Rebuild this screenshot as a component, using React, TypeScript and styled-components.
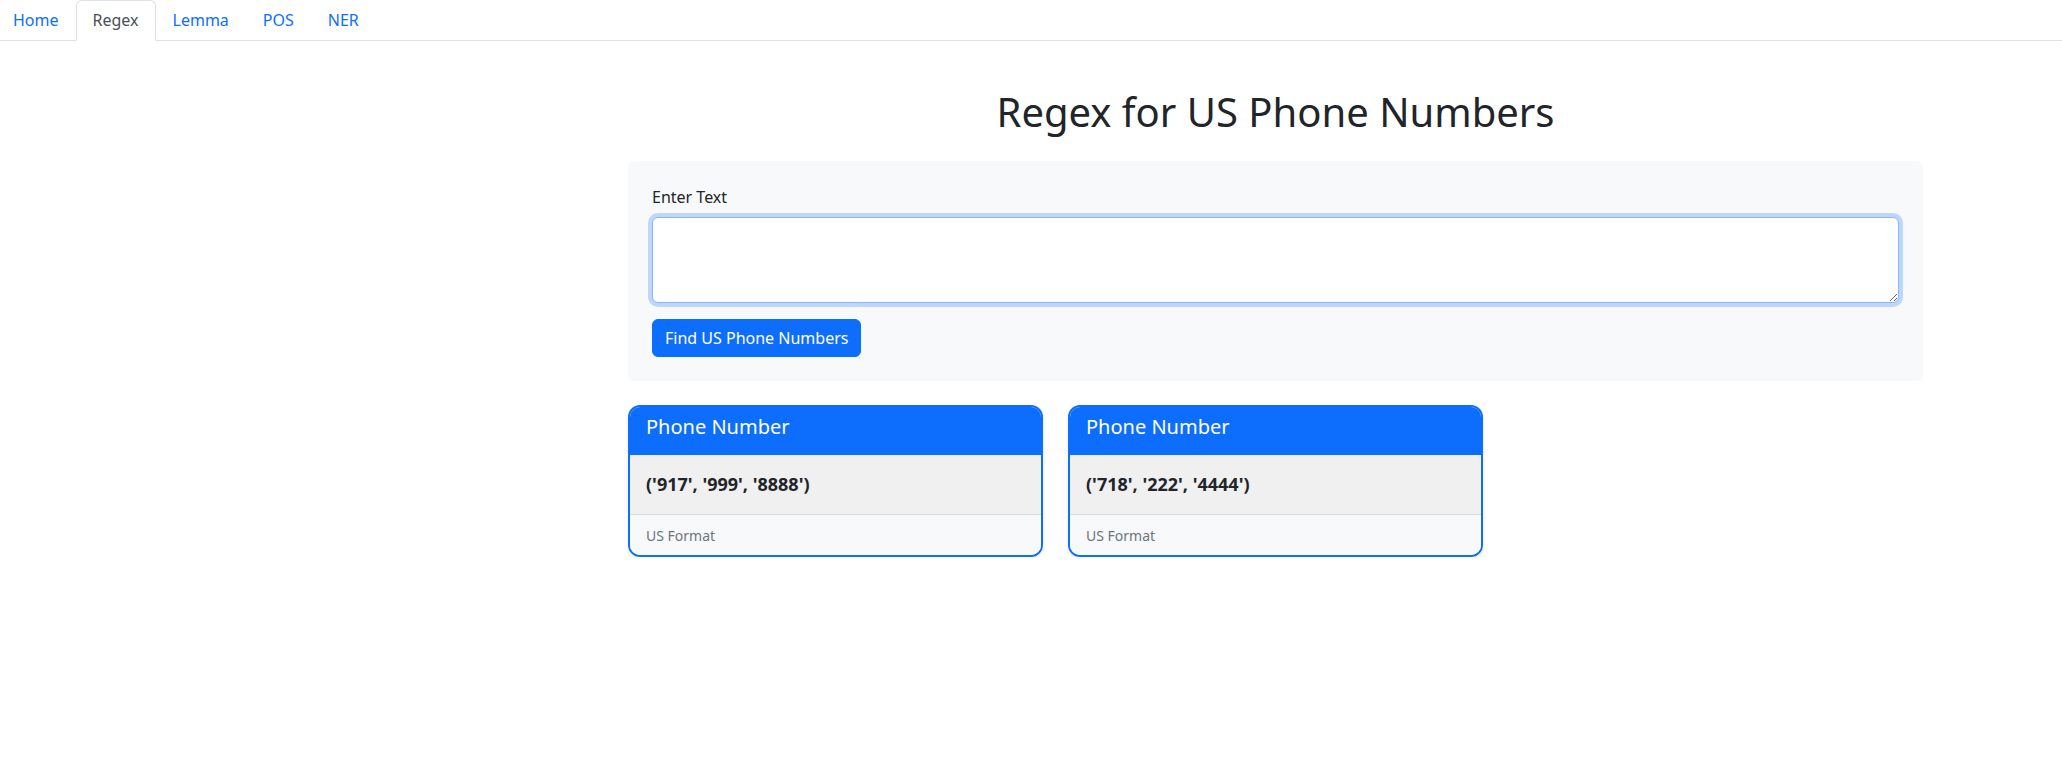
import React from "react";
import styled, { createGlobalStyle } from "styled-components";

const GlobalStyle = createGlobalStyle`
  * {
    box-sizing: border-box;
  }
  body {
    margin: 0;
    background: #fff;
    color: #212529;
    font-family: "Noto Sans", "Open Sans", sans-serif;
    font-size: 16px;
    line-height: 1.5;
  }
`;

interface PhoneMatch {
  parts: string[];
  format: string;
}

const tabs = ["Home", "Regex", "Lemma", "POS", "NER"];

const matches: PhoneMatch[] = [
  { parts: ["917", "999", "8888"], format: "US Format" },
  { parts: ["718", "222", "4444"], format: "US Format" },
];

const TabBar = styled.nav`
  display: flex;
  border-bottom: 1px solid #dee2e6;

  & > :first-child {
    margin-left: -4px;
  }
`;

const Tab = styled.a<{ $active?: boolean }>`
  display: block;
  padding: 7px 16px 8px;
  margin-bottom: -1px;
  border: 1px solid transparent;
  border-top-left-radius: 6px;
  border-top-right-radius: 6px;
  color: #0d6efd;
  text-decoration: none;
  cursor: pointer;

  ${(p) =>
    p.$active &&
    `
    color: #495057;
    background: #fff;
    border-color: #dee2e6 #dee2e6 #fff;
  `}
`;

const Main = styled.main`
  width: 1295px;
  margin-left: 628px;
`;

const Title = styled.h1`
  margin: 47px 0 25px;
  font-size: 40px;
  font-weight: 400;
  line-height: 1.2;
  text-align: center;
`;

const FormPanel = styled.form`
  background: #f8f9fa;
  border-radius: 6px;
  padding: 24px;
`;

const Label = styled.label`
  display: block;
  margin-bottom: 8px;
`;

const TextArea = styled.textarea`
  display: block;
  width: 100%;
  height: 86px;
  padding: 6px 12px;
  font: inherit;
  color: #212529;
  background: #fff;
  border: 1px solid #86b7fe;
  border-radius: 6px;
  box-shadow: 0 0 0 4px rgba(13, 110, 253, 0.25);
  outline: none;
  resize: vertical;
`;

const PrimaryButton = styled.button`
  margin-top: 16px;
  padding: 6px 12px;
  font: inherit;
  color: #fff;
  background: #0d6efd;
  border: 1px solid #0d6efd;
  border-radius: 6px;
  cursor: pointer;
`;

const CardRow = styled.div`
  display: flex;
  gap: 25px;
  margin-top: 24px;
`;

const Card = styled.div`
  width: 415px;
  border: 2px solid #0d6efd;
  border-radius: 12px;
  overflow: hidden;
  box-shadow: 0 2px 4px rgba(0, 0, 0, 0.08);
`;

const CardHeader = styled.div`
  background: #0d6efd;
  color: #fff;
  padding: 8px 16px;
`;

const CardHeading = styled.h5`
  margin: 0 0 8px;
  font-size: 20px;
  font-weight: 400;
  line-height: 1.2;
`;

const CardBody = styled.div`
  background: #f0f0f0;
  padding: 16px;
  font-size: 18px;
  font-weight: 700;
  line-height: 27px;
`;

const CardFooter = styled.div`
  background: #f8f9fa;
  border-top: 1px solid #dadada;
  padding: 8px 16px;
`;

const Muted = styled.small`
  font-size: 14px;
  color: #6c757d;
`;

export default function App() {
  return (
    <>
      <GlobalStyle />
      <TabBar>
        {tabs.map((t) => (
          <Tab key={t} $active={t === "Regex"}>
            {t}
          </Tab>
        ))}
      </TabBar>
      <Main>
        <Title>Regex for US Phone Numbers</Title>
        <FormPanel onSubmit={(e) => e.preventDefault()}>
          <Label htmlFor="text">Enter Text</Label>
          <TextArea id="text" rows={3} autoFocus />
          <PrimaryButton type="submit">Find US Phone Numbers</PrimaryButton>
        </FormPanel>
        <CardRow>
          {matches.map((m, i) => (
            <Card key={i}>
              <CardHeader>
                <CardHeading>Phone Number</CardHeading>
              </CardHeader>
              <CardBody>
                ({m.parts.map((p) => `'${p}'`).join(", ")})
              </CardBody>
              <CardFooter>
                <Muted>{m.format}</Muted>
              </CardFooter>
            </Card>
          ))}
        </CardRow>
      </Main>
    </>
  );
}
